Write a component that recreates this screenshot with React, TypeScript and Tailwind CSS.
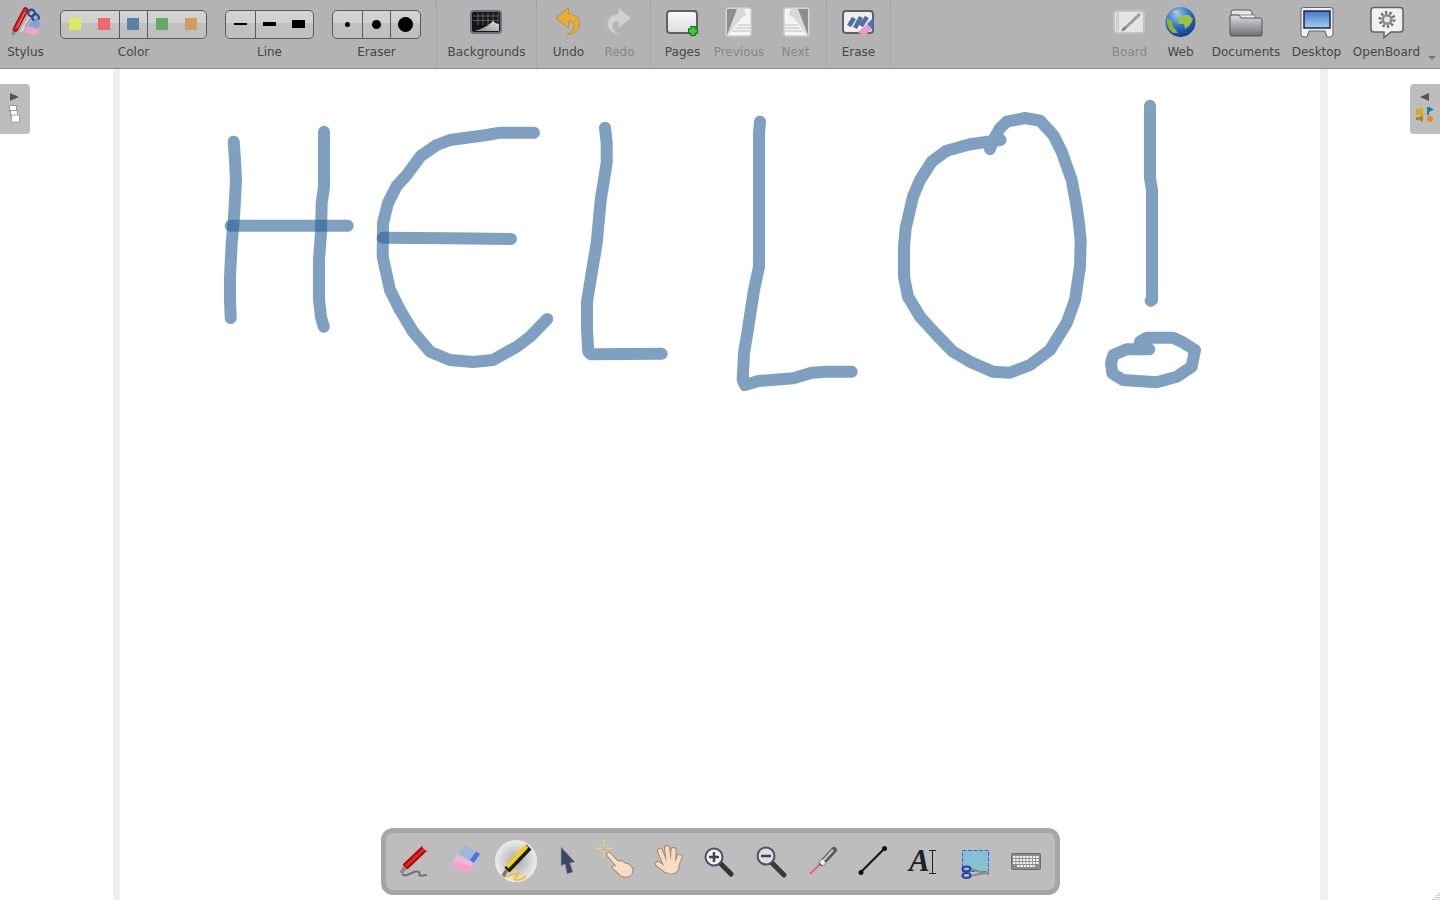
import React from "react";

type P = [number, number];
const strokes: P[][] = [
  [[233.7,141.7],[235,160],[236,180],[235,200],[234,217],[231.7,243],[230,277],[230,300],[230.7,318]],
  [[324,131.7],[324,187],[321.7,203],[321,233],[319,260],[319,300],[321,317],[323.7,326.7]],
  [[230.7,225.7],[347.7,225.7]],
  [[534,132.7],[500,132.7],[486.7,135],[450,140],[436.7,145],[420.7,156],[406.7,175],[396.7,186],[388,203],[383,223],[382.7,256.7],[390,290],[400,310],[413,331.7],[430,351.7],[450,360],[473,362],[493,360],[516.7,346.7],[530,336.7],[547.3,319]],
  [[382.7,237.7],[450,238.3],[511,239]],
  [[605,127.7],[606.7,143],[606.7,163],[600.7,200],[596.7,243],[591.7,273],[587,301.7],[587,330],[588.3,351.7],[590.7,354.3],[661.7,353.7]],
  [[760,121.7],[759,133],[759,266.7],[754,290],[747.3,333.3],[744,353],[742.7,380],[745,385],[758.3,381],[793.3,378.3],[811.7,372.7],[826.7,371.7],[851.7,371.7]],
  [[990,149],[993.3,140],[1000,128.3],[1006.7,121.7],[1025,118],[1040,120.7],[1053.3,135],[1061.7,151.7],[1071.7,180],[1076,203],[1078.3,218],[1080.7,240],[1080,266.7],[1075,300],[1066.7,323],[1050,350],[1030,365],[1010,372.7],[993,371.7],[970,361.7],[953,351.7],[936.7,335],[920,316.7],[908,296.7],[904,276.7],[904,246.7],[905.7,228],[913,196.7],[920,180],[931.7,161.7],[946.7,150.7],[970,144.3],[1000.7,140]],
  [[1150,105.7],[1150,178.3],[1152,190],[1152,300],[1150.7,300.7]],
  [[1149.3,349.3],[1126.7,349.3],[1113.3,355],[1111,363],[1112.3,373.3],[1123,380],[1156.7,382.3],[1176.7,376.7],[1191.7,366.7],[1195,350],[1181.7,341.7],[1173,337.7],[1146.7,337.7],[1140,341.7],[1139,348]],
];

function line(pts: P[]): string {
  return pts.map((p, i) => `${i ? "L" : "M"}${p[0]} ${p[1]}`).join(" ");
}

const Ic = ({ children, s = 36, h = 34 }: { children: React.ReactNode; s?: number; h?: number }) => (
  <svg width={s} height={h} viewBox={`0 0 ${s} ${h}`} className="block shrink-0">{children}</svg>
);

const Btn = ({ label, w, off, children }: { label: string; w: string; off?: boolean; children: React.ReactNode }) => (
  <div className={`${w} flex flex-col items-center shrink-0`}>
    <div className="h-[34px] mt-[5px] flex justify-center">{children}</div>
    <div className={`mt-[6px] text-[12px] leading-[14px] whitespace-nowrap ${off ? "text-[#868686]" : "text-[#454545]"}`}>{label}</div>
  </div>
);

const Widget = ({ label, w, children }: { label: string; w: string; children: React.ReactNode }) => (
  <div className={`${w} flex flex-col items-center shrink-0`}>
    <div className="mt-[10px] h-[29px] flex rounded-[5px] border border-[#5a5a5a] overflow-hidden bg-[linear-gradient(#d2d2d2_0,#d0d0d0_46%,#c0c0c0_46%,#bfbfbf_100%)]">{children}</div>
    <div className="mt-[6px] text-[12px] leading-[14px] text-[#454545]">{label}</div>
  </div>
);

const Sw = ({ c }: { c: string }) => <div className={`w-[12px] h-[12px] ${c}`} />;
const Sep = "border-r border-dotted border-[#999999]";

const StylusIcon = () => (
  <Ic>
    <path d="M4.5 30 L8 23" stroke="#8a8a8a" strokeWidth="3.5" />
    <path d="M7.5 24 L17.5 5" stroke="#8c0f0f" strokeWidth="5.5" strokeLinecap="round" />
    <path d="M7.5 24 L17.5 5" stroke="#dd2020" strokeWidth="3.5" strokeLinecap="round" />
    <path d="M9 23 L17 7" stroke="#f6a0a0" strokeWidth="0.8" />
    <path d="M13 27 L23 9" stroke="#d9d9d9" strokeWidth="2.2" />
    <path d="M17 22 L24 11" stroke="#a9a9a9" strokeWidth="2" />
    <circle cx="23.5" cy="8" r="3.3" fill="none" stroke="#24489a" strokeWidth="2.2" />
    <circle cx="27.5" cy="12.5" r="3.3" fill="none" stroke="#24489a" strokeWidth="2.2" />
    <path d="M22 18 L32.5 22 L27 31 L16.5 27 Z" fill="#f0a3cf" />
    <path d="M22 18 L29.5 14 L32.5 18 L30 24 L20 21 Z" fill="#7da3dc" />
  </Ic>
);

const Arrow = ({ fill, stroke }: { fill: string; stroke: string }) => (
  <path d="M5 13 L17.5 3 L17.5 9 C25 9 29 14 28.5 20 C28 25 23 29 16 29.5 C21.5 27 24 23 23 19.5 C22 16.5 20 16 17.5 16 L17.5 23 Z" fill={fill} stroke={stroke} strokeWidth="0.8" />
);

const PageIcon = ({ flip, x }: { flip?: boolean; x: number }) => (
  <Ic>
    <g transform={flip ? `translate(${2 * x + 27},0) scale(-1,1)` : undefined}>
      <rect x={x + 0.5} y="2.5" width="26" height="29" rx="3" fill="#d8d8d8" stroke="#c4c4c4" />
      <path d={`M${x + 2} 4 H${x + 12} L${x + 2} 30 Z`} fill="#8e8e8e" />
      <path d={`M${x + 18} 4 H${x + 25} V30 H${x + 3} L${x + 17} 12 C${x + 22} 12 ${x + 22} 7 ${x + 18} 4 Z`} fill="#f5f5f5" />
      <path d={`M${x + 12} 20 H${x + 25} M${x + 10} 23 H${x + 25} M${x + 7} 26 H${x + 25}`} stroke="#bdbdbd" strokeWidth="1" />
    </g>
  </Ic>
);

const Gear = ({ cx, cy }: { cx: number; cy: number }) => (
  <g>
    <circle cx={cx} cy={cy} r="7" fill="none" stroke="#6b6b6b" strokeWidth="3" strokeDasharray="2.2 2.2" />
    <circle cx={cx} cy={cy} r="5.5" fill="#8a8a8a" />
    <circle cx={cx} cy={cy} r="3" fill="#e6e6e6" />
  </g>
);

const pal = "w-[51px] h-[44px] flex justify-center items-center shrink-0";

export default function App() {
  return (
    <div className="relative h-[900px] w-[1440px] overflow-hidden bg-white flex flex-col font-['DejaVu_Sans',sans-serif]">
      <header className="h-[69px] shrink-0 flex bg-[#b3b3b3] border-b border-[#8c8c8c]">
        <div className={`flex w-[437px] shrink-0 ${Sep}`}>
          <Btn label="Stylus" w="w-[51px]"><StylusIcon /></Btn>
          <Widget label="Color" w="w-[165px]">
            <div className="w-[58px] flex items-center gap-[17px] pl-[8px] pb-[1px]"><Sw c="bg-[#dde765]" /><Sw c="bg-[#ee6a6a]" /></div>
            <div className="w-[28px] flex items-center justify-start pl-[7px] pb-[1px] border-l border-[#5a5a5a]"><Sw c="bg-[#5c80a6]" /></div>
            <div className="w-[59px] flex items-center gap-[17px] pl-[8px] pb-[1px] border-l border-[#5a5a5a]"><Sw c="bg-[#67a866]" /><Sw c="bg-[#cc9e62]" /></div>
          </Widget>
          <Widget label="Line" w="w-[107px]">
            <div className="w-[29px] flex items-center justify-center pb-[1px]"><div className="w-[13px] h-[2px] bg-black" /></div>
            <div className="w-[58px] flex items-center gap-[16px] pl-[7px] pb-[1px] border-l border-[#5a5a5a]">
              <div className="w-[13px] h-[4px] bg-black" /><div className="w-[13px] h-[8px] bg-black" />
            </div>
          </Widget>
          <Widget label="Eraser" w="w-[107px]">
            <div className="w-[29px] flex items-center justify-center pb-[1px]"><div className="w-[5px] h-[5px] rounded-full bg-black" /></div>
            <div className="w-[28px] flex items-center justify-center pb-[1px] border-l border-[#5a5a5a]"><div className="w-[9px] h-[9px] rounded-full bg-black" /></div>
            <div className="w-[30px] flex items-center justify-center pb-[1px] border-l border-[#5a5a5a]"><div className="w-[15px] h-[15px] rounded-full bg-black" /></div>
          </Widget>
        </div>

        <div className={`flex w-[100px] shrink-0 ${Sep}`}>
          <Btn label="Backgrounds" w="w-[99px]">
            <Ic>
              <defs><linearGradient id="bgc" x1="0" y1="1" x2="1" y2="0"><stop offset="0" stopColor="#8c8c8c" /><stop offset="1" stopColor="#e2e2e2" /></linearGradient></defs>
              <rect x="2" y="6" width="30" height="22" rx="3" fill="#161616" stroke="#6a7080" strokeWidth="2" />
              <path d="M4 11 H30 M4 15.5 H30 M9 8 V20 M14 8 V20 M19 8 V20 M24 8 V20 M29 8 V20" stroke="#6e6e6e" strokeWidth="0.8" />
              <path d="M5 26 C14 24 20 20 24 16 C26 18 28 19 30 19 V26 Z" fill="url(#bgc)" />
            </Ic>
          </Btn>
        </div>

        <div className={`flex w-[114px] shrink-0 pl-[6px] ${Sep}`}>
          <Btn label="Undo" w="w-[51px]"><Ic><Arrow fill="#e8ad32" stroke="#b88a2a" /></Ic></Btn>
          <Btn label="Redo" w="w-[51px]" off><Ic><g transform="translate(34,0) scale(-1,1)"><Arrow fill="#d2d2d2" stroke="#bcbcbc" /></g></Ic></Btn>
        </div>

        <div className={`flex w-[176px] shrink-0 pl-[6px] ${Sep}`}>
          <Btn label="Pages" w="w-[51px]">
            <Ic>
              <defs><linearGradient id="pg" x1="0" y1="0" x2="0" y2="1"><stop offset="0" stopColor="#fafafa" /><stop offset="1" stopColor="#dcdcdc" /></linearGradient></defs>
              <rect x="2" y="6" width="30" height="22" rx="3" fill="url(#pg)" stroke="#5e5f6c" strokeWidth="2" />
              <path d="M28 21 V31 M23 26 H33" stroke="#0f6b12" strokeWidth="5.5" />
              <path d="M28 22 V30 M24 26 H32" stroke="#37d02f" strokeWidth="3.5" />
            </Ic>
          </Btn>
          <Btn label="Previous" w="w-[62px]" off><PageIcon x={4} /></Btn>
          <Btn label="Next" w="w-[51px]" off><PageIcon x={5} flip /></Btn>
        </div>

        <div className={`flex w-[64px] shrink-0 pl-[6px] ${Sep}`}>
          <Btn label="Erase" w="w-[51px]">
            <Ic>
              <rect x="2" y="6" width="30" height="22" rx="3" fill="#eeeeee" stroke="#5e5f6c" strokeWidth="2" />
              <path d="M8 21 L13 13 M14 23 L20 12 M20 21 L26 12" stroke="#4f6f9f" strokeWidth="4.5" />
              <path d="M17 27 L26 19 L31 24 L23 31 Z" fill="#f099c6" />
              <path d="M26 19 L31 14 L33 17 L31 24 Z" fill="#4d72c9" />
            </Ic>
          </Btn>
        </div>

        <div className="flex-1" />

        <div className="flex shrink-0">
          <Btn label="Board" w="w-[51px]" off>
            <Ic>
              <rect x="2" y="6" width="30" height="22" rx="3" fill="#e4e4e4" stroke="#c2c2c2" strokeWidth="2" />
              <path d="M4 8 H7 V26 H4 Z" fill="#cfcfcf" />
              <path d="M11 25 L28 9" stroke="#9a9a9a" strokeWidth="3" />
              <path d="M10 26 L13 22" stroke="#777" strokeWidth="1.5" />
            </Ic>
          </Btn>
          <Btn label="Web" w="w-[51px]">
            <Ic>
              <defs><radialGradient id="gl" cx="0.4" cy="0.25" r="0.85"><stop offset="0" stopColor="#9cc8f0" /><stop offset="0.5" stopColor="#2a6cc8" /><stop offset="1" stopColor="#0c2f7c" /></radialGradient></defs>
              <circle cx="17.5" cy="17" r="15" fill="url(#gl)" />
              <path d="M14 13 L22 10 L26 10 L30 14 L27 20 L22 24 L21 19 L16 19 Z" fill="#9bc23c" />
              <path d="M4 13 L9 16 L10 21 L15 28 L10 28 C6 25 3 20 4 13 Z" fill="#8cb532" />
              <path d="M10 6 L16 5 L14 8 L10 8 Z" fill="#b4d873" />
            </Ic>
          </Btn>
          <Btn label="Documents" w="w-[80px]">
            <Ic>
              <defs><linearGradient id="fd" x1="0" y1="0" x2="0" y2="1"><stop offset="0" stopColor="#dedede" /><stop offset="1" stopColor="#6c6c74" /></linearGradient></defs>
              <path d="M3 8 Q3 5 5 5 H21 Q24 5 24 8 V12 H3 Z" fill="#e8e8e8" stroke="#55555e" />
              <path d="M4 10 H27 V14 H4 Z" fill="#f0f0f0" stroke="#66666e" strokeWidth="0.7" />
              <path d="M2 12 Q2 10 4 10 H11 L13 13 H32 Q34 13 34 15 V29 Q34 31 32 31 H4 Q2 31 2 29 Z" fill="url(#fd)" stroke="#55555e" />
            </Ic>
          </Btn>
          <Btn label="Desktop" w="w-[61px]">
            <Ic>
              <defs><linearGradient id="ds" x1="0" y1="0" x2="0" y2="1"><stop offset="0" stopColor="#3f78c8" /><stop offset="1" stopColor="#a8cdf0" /></linearGradient></defs>
              <path d="M2 5 Q2 2.5 4.5 2.5 H31.5 Q34 2.5 34 5 V29 Q34 32 31 32 H28 L26 26 H10 L8 32 H5 Q2 32 2 29 Z" fill="#f0f0f0" stroke="#62626a" />
              <rect x="5" y="6" width="26" height="17" fill="url(#ds)" stroke="#1b2a44" strokeWidth="1.5" />
            </Ic>
          </Btn>
          <Btn label="OpenBoard" w="w-[79px]">
            <Ic>
              <path d="M5 2.5 H31 Q34 2.5 34 5.5 V24 Q34 27 31 27 H22 L15 32.5 V27 H5 Q2 27 2 24 V5.5 Q2 2.5 5 2.5 Z" fill="#f1f1f1" stroke="#62626e" strokeWidth="1.5" />
              <Gear cx={18} cy={14.5} />
            </Ic>
          </Btn>
          <div className="w-[12px] mr-[2px] flex justify-center pt-[56px]">
            <div className="w-0 h-0 border-x-[4px] border-x-transparent border-t-[4px] border-t-[#777777]" />
          </div>
        </div>
      </header>

      <main className="flex-1 flex min-h-0 bg-white">
        <div className="w-[113px] shrink-0" />
        <div className="w-[1215px] shrink-0 bg-white border-l-[7px] border-r-[8px] border-[#f0f0f0]" />
      </main>

      <svg className="absolute left-0 top-0 pointer-events-none" width="1440" height="900">
        {strokes.map((s, i) => (
          <path key={i} d={line(s)} fill="none" stroke="#2a6196" strokeOpacity="0.6" strokeWidth="12" strokeLinecap="round" strokeLinejoin="round" />
        ))}
      </svg>

      <div className="absolute left-0 top-[84px] w-[30px] h-[50px] bg-[#bdbdbd] rounded-r-[4px] flex flex-col items-center pt-[8px] gap-[3px]">
        <svg width="12" height="10" viewBox="0 0 12 10" className="-ml-[2px]"><path d="M2 1 L11 5 L2 9 Z" fill="#555555" /></svg>
        <svg width="14" height="18" viewBox="0 0 14 18" className="-ml-[2px]">
          <rect x="2.5" y="0.5" width="7" height="6" fill="#fff" stroke="#9a9a9a" />
          <rect x="3.5" y="5.5" width="7" height="6" fill="#fff" stroke="#9a9a9a" />
          <rect x="4.5" y="10" width="8" height="7" fill="#fff" stroke="#a5a5a5" />
        </svg>
      </div>

      <div className="absolute right-0 top-[84px] w-[30px] h-[50px] bg-[#bdbdbd] rounded-l-[4px] flex flex-col items-center pt-[8px] gap-[4px]">
        <svg width="12" height="10" viewBox="0 0 12 10"><path d="M10 1 L1 5 L10 9 Z" fill="#555555" /></svg>
        <svg width="20" height="16" viewBox="0 0 20 16">
          <path d="M1 3 H4 L5 2 H8 V9 H1 Z" fill="#e3a716" />
          <path d="M12 1 H14 L19 3.5 L14 6 V9 H12 Z" fill="#1a80a8" />
          <path d="M1 11 H4 L8 9 V16 L4 14 H1 Z" fill="#97912a" />
          <circle cx="15" cy="13" r="3" fill="#ee8424" />
        </svg>
      </div>

      <div className="absolute left-[381px] top-[828px] w-[679px] h-[67px] rounded-[12px] border-[5px] border-[#a6a6a6] bg-[#bdbdbd] flex items-center justify-center pr-[1px] pb-[1px]">
        <div className={pal}>
          <Ic s={44} h={44}>
            <path d="M10 35 C15 40 21 30 27 33 C30 35 22 38 35 36" fill="none" stroke="#747474" strokeWidth="2" />
            <path d="M9 34 L14 27" stroke="#8a8a8a" strokeWidth="4" />
            <path d="M13 28 L33 9" stroke="#a50a0a" strokeWidth="7" />
            <path d="M14 27 L32 10" stroke="#ee2222" strokeWidth="3" />
            <path d="M32 10 L35 7" stroke="#bcbcbc" strokeWidth="6" />
          </Ic>
        </div>
        <div className={pal}>
          <Ic s={44} h={44}>
            <path d="M22 6 L37 15 L30 25 L15 15 Z" fill="#9fb6d8" />
            <path d="M33 12.5 L37 15 L30 25 L27 21 Z" fill="#4f72ea" />
            <path d="M8 26 L24 35 L31 24 L15 15 Z" fill="#e8bcd8" />
            <path d="M8 26 L24 35 L29 27 L13 22 Z" fill="#fb9fc8" />
          </Ic>
        </div>
        <div className={pal}>
          <div className="w-[42px] h-[42px] rounded-full bg-[radial-gradient(circle,#a8a8a8_0%,#e2e2e2_60%,#fafafa_85%)] flex items-center justify-center">
            <Ic s={42} h={42}>
              <path d="M8 37 C16 35 28 31 23 35 C21 37 17 39 21 40 C25 40 29 38 31 36" fill="none" stroke="#e8c83a" strokeWidth="2.2" />
              <path d="M8 36 L12 30" stroke="#777" strokeWidth="3.5" />
              <path d="M12 30 L34 7" stroke="#1d1d1d" strokeWidth="7" />
              <path d="M12 27 L32 6" stroke="#f4d10e" strokeWidth="4" />
            </Ic>
          </div>
        </div>
        <div className={pal}>
          <Ic s={44} h={44}>
            <path d="M16 8 L30 23 L25 24 L28 33 L22 35 L20 25 L16 27 Z" fill="#3e4763" stroke="#9aa0ae" strokeWidth="0.6" />
          </Ic>
        </div>
        <div className={pal}>
          <Ic s={44} h={44}>
            <path d="M8 1 V7 M8 12 V18 M0 9.7 H6 M10 9.7 H16 M3 5 L5.5 7.5 M10.5 12 L13 14.5 M13 5 L10.5 7.5 M3 14.5 L5.5 12" stroke="#f0dc55" strokeWidth="1" />
            <path d="M10.5 16 C10.5 12.5 14 12.5 15.5 15 L22 22 C25 21 27 22 29 24 C32 24 35 26 36.5 29 C38 33 36 37 32 38 C27 39 24 37 22 34 L17 30 C15 28 18 26 19.5 27 Z" fill="#f8dcc4" stroke="#9a7b60" strokeWidth="1" />
          </Ic>
        </div>
        <div className={pal}>
          <Ic s={44} h={44}>
            <g stroke="#a08468" strokeWidth="6" strokeLinecap="round" fill="none">
              <path d="M13 12 L18 24" /><path d="M20 9 L22 24" /><path d="M26.5 11 L26 24" /><path d="M32.5 18 L29 27" /><path d="M11 25 L19 31" />
            </g>
            <ellipse cx="24" cy="28" rx="8.5" ry="7.5" fill="#a08468" />
            <ellipse cx="24" cy="28" rx="7.5" ry="6.8" fill="#f6dcc4" />
            <g stroke="#f6dcc4" strokeWidth="4.2" strokeLinecap="round" fill="none">
              <path d="M13 12 L18 24" /><path d="M20 9 L22 24" /><path d="M26.5 11 L26 24" /><path d="M32.5 18 L29 27" /><path d="M11 25 L19 31" />
            </g>
          </Ic>
        </div>
        <div className={pal}>
          <Ic s={44} h={44}>
            <path d="M20 22 L33 35" stroke="#333338" strokeWidth="5" strokeLinecap="round" />
            <circle cx="16" cy="18" r="8.5" fill="#f2f2f2" stroke="#4a5068" strokeWidth="2" />
            <path d="M16 13 V23 M11 18 H21" stroke="#444" strokeWidth="2.5" />
          </Ic>
        </div>
        <div className={pal}>
          <Ic s={44} h={44}>
            <path d="M22 23 L35 36" stroke="#38383c" strokeWidth="5" strokeLinecap="round" />
            <circle cx="17" cy="17" r="8.5" fill="#dddddd" stroke="#4a5068" strokeWidth="2" />
            <path d="M12 17 H22" stroke="#444" strokeWidth="2.5" />
          </Ic>
        </div>
        <div className={pal}>
          <Ic s={44} h={44}>
            <path d="M10 35 L22 23" stroke="#e88" strokeWidth="2.5" opacity="0.8" />
            <path d="M10 35 L22 23" stroke="#d22" strokeWidth="0.8" />
            <path d="M22 24 L34 11" stroke="#5c5c5c" strokeWidth="6" strokeLinecap="round" />
            <path d="M22 23 L33 11" stroke="#c8c8c8" strokeWidth="2" />
            <path d="M21 25 L24 22" stroke="#eeeeee" strokeWidth="5" />
          </Ic>
        </div>
        <div className={pal}>
          <Ic s={44} h={44}>
            <path d="M10 33 L33 10" stroke="#111" strokeWidth="2" />
            <circle cx="10" cy="33.5" r="2.5" fill="#111" />
            <circle cx="33.5" cy="9.5" r="2.5" fill="#111" />
          </Ic>
        </div>
        <div className={pal}>
          <div className="relative w-[44px] h-[44px]">
            <span className="absolute left-[7px] top-[4px] text-[31px] leading-[36px] font-bold italic text-[#222222] font-['Liberation_Serif',serif]">A</span>
            <svg className="absolute left-0 top-0" width="44" height="44" viewBox="0 0 44 44">
              <path d="M27 11.5 H34 M27 34.5 H34 M30.5 11.5 V34.5" stroke="#222" strokeWidth="1" fill="none" />
            </svg>
          </div>
        </div>
        <div className={pal}>
          <Ic s={44} h={44}>
            <rect x="9.5" y="11.5" width="26" height="21" fill="#87c0d0" stroke="#2a68e0" strokeWidth="1" strokeDasharray="4 1.5" />
            <path d="M17 30 L36 35 M17 37 L36 33" stroke="#8a8a8a" strokeWidth="2.2" />
            <ellipse cx="13.5" cy="30" rx="4" ry="2.4" fill="none" stroke="#2c3f9c" strokeWidth="2" />
            <ellipse cx="13.5" cy="36.5" rx="4" ry="2.4" fill="none" stroke="#2c3f9c" strokeWidth="2" />
          </Ic>
        </div>
        <div className={pal}>
          <Ic s={44} h={44}>
            <rect x="7.5" y="14.5" width="29" height="16" rx="1" fill="#8c8c90" stroke="#6a6a70" />
            <path d="M9 18 H35 M9 21 H35 M9 24 H35 M13 27 H31" stroke="#f2f2f2" strokeWidth="2" strokeDasharray="2.5 0.8" />
          </Ic>
        </div>
      </div>

      <svg className="absolute right-0 bottom-0" width="8" height="8" viewBox="0 0 8 8">
        <path d="M7 1 V2 M5 3 V4 M7 3 V4 M3 5 V6 M5 5 V6 M7 5 V6 M1 7 V8 M3 7 V8 M5 7 V8 M7 7 V8" stroke="#9a9a9a" strokeWidth="1" />
      </svg>
    </div>
  );
}
